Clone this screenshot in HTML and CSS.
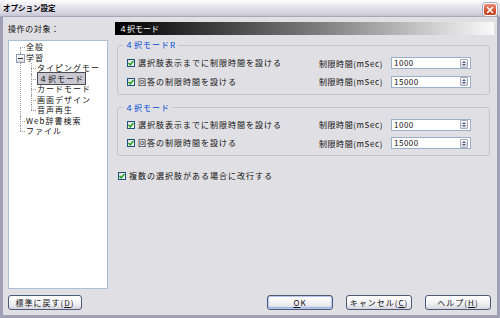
FILE: index.html
```html
<!DOCTYPE html>
<html lang="ja">
<head>
    <meta charset="UTF-8">
    <title>オプション設定</title>
    <link rel="stylesheet" href="styles.css">
</head>
<body>
    <div class="window">
        <div class="titlebar">
            <span class="title">オプション設定</span>
            <span class="close">
                <svg width="8" height="8" viewBox="0 0 8 8"><path d="M1 1L7 7M7 1L1 7" stroke="#fff" stroke-width="1.6"/></svg>
            </span>
        </div>

        <div class="dialog">
            <div class="main">
                <!-- left: target tree -->
                <div class="side">
                    <div class="target-label">操作の対象：</div>
                    <div class="tree">
                        <ul class="root">
                            <li>全般</li>
                            <li><span class="toggle"></span>学習
                                <ul>
                                    <li>タイピングモー</li>
                                    <li><span class="selected">４択モード</span></li>
                                    <li>カードモード</li>
                                    <li>画面デザイン</li>
                                    <li>音声再生</li>
                                </ul>
                            </li>
                            <li>Web辞書検索</li>
                            <li>ファイル</li>
                        </ul>
                    </div>
                </div>

                <!-- right: settings page -->
                <div class="content">
                    <div class="page-header">４択モード</div>

                    <fieldset class="group">
                        <legend>４択モードR</legend>
                        <div class="row">
                            <label class="check"><span class="box"><svg width="6" height="6" viewBox="0 0 6 6"><path d="M0.5 3L2.3 4.8L5.5 1" fill="none" stroke="#21a121" stroke-width="1.5"/></svg></span>選択肢表示までに制限時間を設ける</label>
                            <span class="time-label">制限時間(mSec)</span>
                            <span class="spin-input">1000<span class="spin"></span></span>
                        </div>
                        <div class="row">
                            <label class="check"><span class="box"><svg width="6" height="6" viewBox="0 0 6 6"><path d="M0.5 3L2.3 4.8L5.5 1" fill="none" stroke="#21a121" stroke-width="1.5"/></svg></span>回答の制限時間を設ける</label>
                            <span class="time-label">制限時間(mSec)</span>
                            <span class="spin-input">15000<span class="spin"></span></span>
                        </div>
                    </fieldset>

                    <fieldset class="group second">
                        <legend>４択モード</legend>
                        <div class="row">
                            <label class="check"><span class="box"><svg width="6" height="6" viewBox="0 0 6 6"><path d="M0.5 3L2.3 4.8L5.5 1" fill="none" stroke="#21a121" stroke-width="1.5"/></svg></span>選択肢表示までに制限時間を設ける</label>
                            <span class="time-label">制限時間(mSec)</span>
                            <span class="spin-input">1000<span class="spin"></span></span>
                        </div>
                        <div class="row">
                            <label class="check"><span class="box"><svg width="6" height="6" viewBox="0 0 6 6"><path d="M0.5 3L2.3 4.8L5.5 1" fill="none" stroke="#21a121" stroke-width="1.5"/></svg></span>回答の制限時間を設ける</label>
                            <span class="time-label">制限時間(mSec)</span>
                            <span class="spin-input">15000<span class="spin"></span></span>
                        </div>
                    </fieldset>

                    <div class="row wrap-row">
                        <label class="check"><span class="box"><svg width="6" height="6" viewBox="0 0 6 6"><path d="M0.5 3L2.3 4.8L5.5 1" fill="none" stroke="#21a121" stroke-width="1.5"/></svg></span>複数の選択肢がある場合に改行する</label>
                    </div>
                </div>
            </div>

            <div class="buttons">
                <button class="btn reset">標準に戻す(<u>D</u>)</button>
                <span class="spacer"></span>
                <button class="btn default"><u>O</u>K</button>
                <button class="btn">キャンセル(<u>C</u>)</button>
                <button class="btn">ヘルプ(<u>H</u>)</button>
            </div>
        </div>
    </div>
</body>
</html>
```

FILE: styles.css
```css
* {
    box-sizing: border-box;
    margin: 0;
    padding: 0;
}

body {
    background: #ffffff;
    font-family: "Noto Sans CJK JP", "DejaVu Sans", sans-serif;
    font-size: 8px;
    color: #111;
}

.window {
    width: 500px;
    height: 318px;
    background: #e0dfe3;
    border: 3px solid #a09fb6;
    border-top: none;
    border-radius: 6px 6px 0 0;
    display: flex;
    flex-direction: column;
}

.titlebar {
    height: 17px;
    margin: 0 -3px;
    padding: 0 3px;
    display: flex;
    align-items: center;
    background: linear-gradient(#ffffff, #ebeaf1 30%, #d6d5e1 80%, #c4c3d4);
    border-bottom: 1px solid #a8a7bd;
    border-radius: 6px 6px 0 0;
}

.title {
    flex: 1;
    font-size: 7.5px;
    font-weight: bold;
    line-height: 10px;
    color: #000;
}

.close {
    width: 14px;
    height: 13px;
    margin-top: 3px;
    display: flex;
    align-items: center;
    justify-content: center;
    background: linear-gradient(#e98a73, #d4502f 60%, #c4401f);
    border: 1px solid #ffffff;
    border-radius: 3px;
    box-shadow: 0 0 0 1px #b0a8b8;
}

.dialog {
    flex: 1;
    display: flex;
    flex-direction: column;
    padding: 5px 3px 0 5px;
}

.main {
    display: flex;
    gap: 7px;
}

.side {
    width: 100px;
}

.target-label {
    height: 13px;
    line-height: 13px;
    letter-spacing: 0.6px;
    margin-bottom: 5px;
}

.tree {
    height: 249px;
    background: #fff;
    border: 1px solid #a9bfd6;
    padding-top: 1px;
    overflow: hidden;
}

.tree ul {
    list-style: none;
}

.tree .root {
    padding-left: 11px;
}

.tree ul ul {
    padding-left: 5px;
}

.tree li {
    position: relative;
    padding-left: 6px;
    line-height: 10.5px;
    letter-spacing: 1px;
    white-space: nowrap;
}

.tree li::before {
    content: "";
    position: absolute;
    left: 0;
    top: 0;
    bottom: 0;
    border-left: 1px dotted #9a9a9a;
}

.tree .root > li:first-child::before {
    top: 5px;
}

.tree li:last-child::before {
    bottom: auto;
    height: 5px;
}

.tree li::after {
    content: "";
    position: absolute;
    left: 0;
    top: 5px;
    width: 5px;
    border-top: 1px dotted #9a9a9a;
}

.toggle {
    position: absolute;
    left: -4px;
    top: 1px;
    width: 9px;
    height: 9px;
    background: linear-gradient(#fff, #d8d8e0);
    border: 1px solid #8f9eb5;
    z-index: 1;
}

.toggle::after {
    content: "";
    position: absolute;
    left: 1px;
    right: 1px;
    top: 3px;
    border-top: 1px solid #333;
}

.selected {
    background: #c9c8d1;
    border: 1px solid #4b4b55;
    padding: 0 1px;
}

.content {
    width: 379px;
}

.page-header {
    height: 13px;
    line-height: 13px;
    padding-left: 4px;
    margin-bottom: 5px;
    color: #fff;
    background: linear-gradient(to right, #000000, #808080 55%, #fafafa);
}

.group {
    margin: 0 4px 0 2px;
    border: 1px solid #c6c5cc;
    border-radius: 3px;
    padding: 7px 18px 6px 9px;
}

.group.second {
    margin-top: 8px;
    padding-top: 6px;
}

.group legend {
    margin-left: -4px;
    padding: 0 2px;
    line-height: 10px;
    color: #0046d5;
    letter-spacing: 1px;
}

.row {
    display: flex;
    align-items: center;
    height: 12px;
}

.row + .row {
    margin-top: 6.5px;
}

.check {
    flex: 1;
    display: flex;
    align-items: center;
    gap: 3px;
    letter-spacing: 1px;
    line-height: 12px;
}

.box {
    width: 8px;
    height: 8px;
    border: 1px solid #1c5180;
    background: linear-gradient(135deg, #dcdcd6, #ffffff);
    display: flex;
    align-items: center;
    justify-content: center;
}

.time-label {
    margin-right: 8px;
    letter-spacing: 0.6px;
}

.spin-input {
    width: 80px;
    height: 12px;
    background: #fff;
    border: 1px solid #9ab0c8;
    display: flex;
    align-items: center;
    padding-left: 2px;
    line-height: 10px;
    letter-spacing: 0.5px;
}

.spin {
    margin-left: auto;
    margin-right: 2px;
    width: 8px;
    height: 9px;
    background: linear-gradient(#fafafa, #d8d8e0);
    border: 1px solid #a8a8b8;
    border-radius: 1px;
    position: relative;
}

.spin::before,
.spin::after {
    content: "";
    position: absolute;
    left: 1px;
    border-left: 2px solid transparent;
    border-right: 2px solid transparent;
}

.spin::before {
    top: 1px;
    border-bottom: 2px solid #4d6185;
}

.spin::after {
    bottom: 1px;
    border-top: 2px solid #4d6185;
}

.wrap-row {
    margin-top: 14px;
    padding-left: 3px;
}

.buttons {
    display: flex;
    gap: 13px;
    margin-top: 6px;
    padding-right: 3px;
    height: 15px;
}

.spacer {
    flex: 1;
}

.btn {
    width: 66px;
    height: 15px;
    font-family: inherit;
    font-size: 8px;
    letter-spacing: 1px;
    line-height: 11px;
    color: #111;
    background: linear-gradient(#ffffff, #f0f0f4 60%, #d6d5de);
    border: 1px solid #4c5a78;
    border-radius: 3px;
}

.btn.reset {
    width: 74px;
}

.btn.default {
    box-shadow: inset 0 0 0 1px #b8c8f0, inset 0 -1px 0 1px #a0b4e0;
}
```
